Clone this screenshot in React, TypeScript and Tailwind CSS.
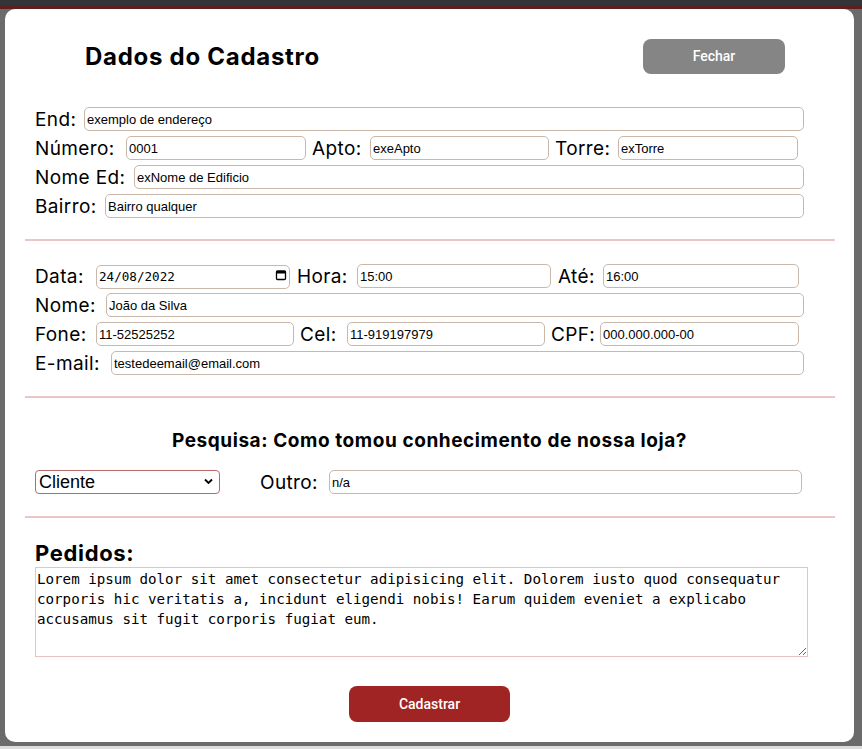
import type { ReactNode } from "react";

const boxCls =
  "h-[24px] shrink-0 rounded-[5px] border border-[#c9b8aa] bg-white px-[2px] text-black outline-none";
const inputCls = `${boxCls} font-['Liberation_Sans',Arial,sans-serif] text-[13px]`;

function Label({ w, children }: { w: string; children: ReactNode }) {
  return (
    <span
      className={`${w} shrink-0 whitespace-nowrap font-['Inter',sans-serif] text-[19px] leading-none tracking-[0.02em] text-black`}
    >
      {children}
    </span>
  );
}

function Divider() {
  return <div className="ml-[20px] h-[2px] w-[810px] bg-[#ebc6c6]" />;
}

export default function App() {
  return (
    <div className="h-[749px] w-[862px] overflow-hidden bg-[#6b6b6b]">
      <div className="h-[5px] bg-[#333538]" />
      <div className="h-[4px] bg-[#5c2020]" />

      <div className="ml-[5px] flex h-[733px] w-[849px] flex-col rounded-[10px] bg-white">
        {/* cabeçalho */}
        <div className="mt-[30px] flex h-[35px] items-center justify-between pl-[80px] pr-[69px]">
          <h2 className="font-['Inter',sans-serif] text-[24px] font-bold tracking-[0.03em] text-black">
            Dados do Cadastro
          </h2>
          <button className="h-[35px] w-[142px] rounded-[8px] bg-[#858585] font-['Roboto',sans-serif] text-[14px] font-medium text-white">
            Fechar
          </button>
        </div>

        {/* endereço */}
        <div className="ml-[30px] mt-[33px] flex w-[769px] flex-col gap-[5px]">
          <div className="flex h-[24px] items-center">
            <Label w="w-[49px]">End:</Label>
            <input className={`${inputCls} flex-1`} defaultValue="exemplo de endereço" />
          </div>
          <div className="flex h-[24px] items-center">
            <Label w="w-[91px]">Número:</Label>
            <input className={`${inputCls} w-[180px]`} defaultValue="0001" />
            <Label w="ml-[6px] w-[58px]">Apto:</Label>
            <input className={`${inputCls} w-[179px]`} defaultValue="exeApto" />
            <Label w="ml-[6px] w-[63px]">Torre:</Label>
            <input className={`${inputCls} w-[180px]`} defaultValue="exTorre" />
          </div>
          <div className="flex h-[24px] items-center">
            <Label w="w-[99px]">Nome Ed:</Label>
            <input className={`${inputCls} flex-1`} defaultValue="exNome de Edificio" />
          </div>
          <div className="flex h-[24px] items-center">
            <Label w="w-[70px]">Bairro:</Label>
            <input className={`${inputCls} flex-1`} defaultValue="Bairro qualquer" />
          </div>
        </div>

        <div className="mt-[21px]">
          <Divider />
        </div>

        {/* contato */}
        <div className="ml-[30px] mt-[23px] flex w-[769px] flex-col gap-[5px]">
          <div className="flex h-[24px] items-center">
            <Label w="w-[61px]">Data:</Label>
            <div className="relative">
              <input
                className={`${boxCls} w-[194px] font-['DejaVu_Sans_Mono',monospace] text-[12.6px]`}
                defaultValue="24/08/2022"
              />
              <svg className="absolute right-[3px] top-[6px]" width="12" height="12" viewBox="0 0 12 12" fill="none">
                <rect x="1.5" y="2" width="9" height="8.5" rx="1" stroke="#000" strokeWidth="1.3" />
                <rect x="1.5" y="2" width="9" height="2.5" fill="#000" />
              </svg>
            </div>
            <Label w="ml-[7px] w-[60px]">Hora:</Label>
            <input className={`${inputCls} w-[194px]`} defaultValue="15:00" />
            <Label w="ml-[7px] w-[45px]">Até:</Label>
            <input className={`${inputCls} w-[196px]`} defaultValue="16:00" />
          </div>
          <div className="flex h-[24px] items-center">
            <Label w="w-[71px]">Nome:</Label>
            <input className={`${inputCls} flex-1`} defaultValue="João da Silva" />
          </div>
          <div className="flex h-[24px] items-center">
            <Label w="w-[61px]">Fone:</Label>
            <input className={`${inputCls} w-[198px]`} defaultValue="11-52525252" />
            <Label w="ml-[6px] w-[47px]">Cel:</Label>
            <input className={`${inputCls} w-[198px]`} defaultValue="11-919197979" />
            <Label w="ml-[6px] w-[49px]">CPF:</Label>
            <input className={`${inputCls} w-[199px]`} defaultValue="000.000.000-00" />
          </div>
          <div className="flex h-[24px] items-center">
            <Label w="w-[76px]">E-mail:</Label>
            <input className={`${inputCls} flex-1`} defaultValue="testedeemail@email.com" />
          </div>
        </div>

        <div className="mt-[21px]">
          <Divider />
        </div>

        {/* pesquisa */}
        <h3 className="mt-[31px] text-center font-['Inter',sans-serif] text-[19px] font-bold leading-[24px] tracking-[0.03em] text-black">
          Pesquisa: Como tomou conhecimento de nossa loja?
        </h3>
        <div className="ml-[30px] mt-[17px] flex h-[24px] items-center">
          <div className="relative">
            <select className="h-[24px] w-[185px] appearance-none rounded-[4px] border border-[#b86a6a] bg-white pl-[3px] font-['Liberation_Sans',Arial,sans-serif] text-[18px] leading-none text-black outline-none">
              <option>Cliente</option>
              <option>Indicação</option>
              <option>Internet</option>
            </select>
            <svg className="pointer-events-none absolute right-[7px] top-[8px]" width="9" height="7" viewBox="0 0 9 7" fill="none">
              <path d="M1 1.5 4.5 5 8 1.5" stroke="#000" strokeWidth="1.8" />
            </svg>
          </div>
          <Label w="ml-[40px] w-[69px]">Outro:</Label>
          <input className={`${inputCls} w-[473px]`} defaultValue="n/a" />
        </div>

        <div className="mt-[22px]">
          <Divider />
        </div>

        {/* pedidos */}
        <h3 className="ml-[30px] mt-[21px] font-['Inter',sans-serif] text-[22px] font-bold leading-[28px] tracking-[0.03em] text-black">
          Pedidos:
        </h3>
        <textarea
          className="ml-[30px] h-[90px] w-[773px] border border-[#e8c3c3] bg-white px-[1px] py-[1px] font-['DejaVu_Sans_Mono',monospace] text-[14.2px] leading-[20px] text-black outline-none"
          defaultValue="Lorem ipsum dolor sit amet consectetur adipisicing elit. Dolorem iusto quod consequatur corporis hic veritatis a, incidunt eligendi nobis! Earum quidem eveniet a explicabo accusamus sit fugit corporis fugiat eum."
        />

        <button className="mx-auto mt-[29px] h-[36px] w-[161px] rounded-[8px] bg-[#a02424] font-['Roboto',sans-serif] text-[14px] font-medium text-white">
          Cadastrar
        </button>
      </div>

      <div className="mt-[4px] h-[3px] bg-[#dcdcdc]" />
    </div>
  );
}
